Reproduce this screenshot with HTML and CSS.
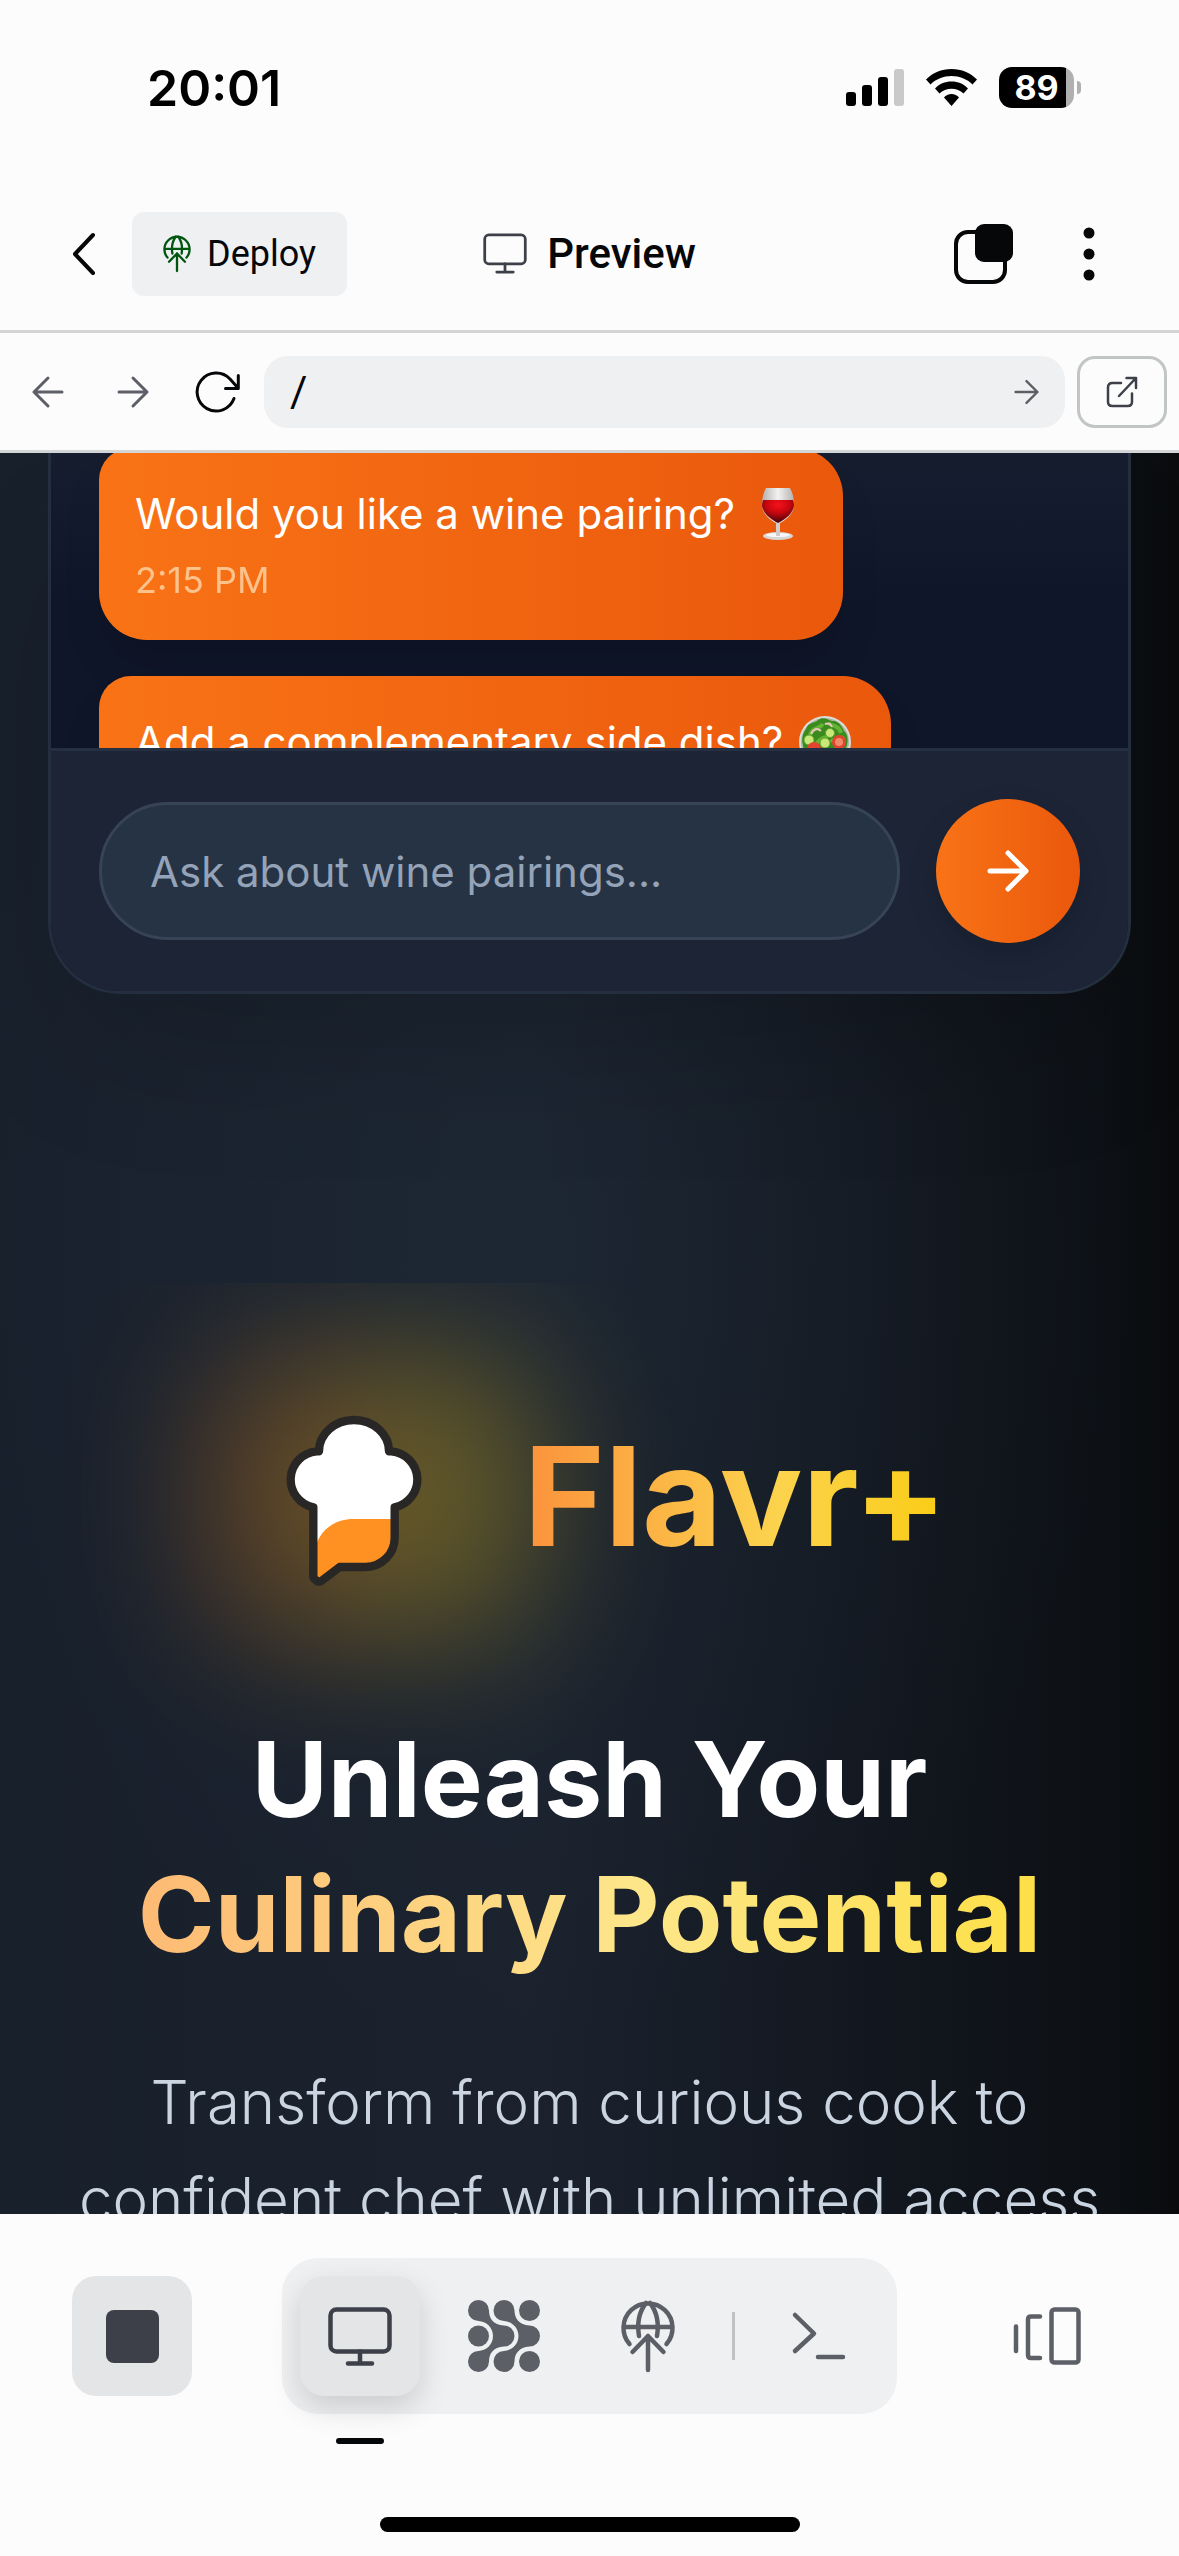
FILE: index.html
```html
<!DOCTYPE html>
<html lang="en">
<head>
<meta charset="utf-8">
<meta name="viewport" content="width=device-width, initial-scale=1">
<title>Preview</title>
<link rel="stylesheet" href="styles.css">
</head>
<body>
<div class="status">
  <time class="clock">20:01</time>
  <div class="status-icons">
    <svg width="58" height="38" viewBox="0 0 58 38" aria-hidden="true"><rect y="23" width="10" height="14" rx="3"/><rect x="16" y="16" width="10" height="21" rx="3"/><rect x="32" y="8" width="10" height="29" rx="3"/><rect x="48" width="10" height="37" rx="3" fill="#c9c9c9"/></svg>
    <svg width="51" height="38" viewBox="0 0 51 38" aria-hidden="true"><path d="M25.500 0C35.500 0 44.500 4 51 10.500L46.500 15.500C41 10 33.500 7 25.500 7S10 10 4.500 15.500L0 10.500C6.500 4 15.500 0 25.500 0ZM25.500 12.500C32 12.500 38 15 42 19.500L37.500 24.500C34.500 21.500 30 19.700 25.500 19.700S16.500 21.500 13.500 24.500L9 19.500C13 15 19 12.500 25.500 12.500ZM25.500 25C28.500 25 31.200 26.500 33 28.500L25.500 37L18 28.500C19.800 26.500 22.500 25 25.500 25Z"/></svg>
    <div class="battery"><span class="battery-level">89</span></div>
  </div>
</div>

<header class="topbar">
  <div class="topbar-left">
    <button class="icon-btn back" aria-label="Back"><svg width="24" height="46" viewBox="0 0 24 46" class="line" stroke-width="4"><path d="M21 4 3 23l18 19"/></svg></button>
    <button class="deploy"><svg width="28" height="37" viewBox="0 0 54 72" class="line" stroke-width="4.500"><use href="#globe-up"/></svg>Deploy</button>
  </div>
  <h1 class="title"><svg width="44" height="41" viewBox="0 0 64 59" class="line" stroke-width="4"><use href="#monitor"/></svg>Preview</h1>
  <div class="topbar-right">
    <button class="icon-btn" aria-label="Tabs"><svg width="60" height="60" viewBox="0 0 60 60"><rect x="2" y="8" width="49" height="50" rx="12" class="line" stroke-width="4"/><rect x="21" y="0" width="38" height="38" rx="9" fill="#060709"/></svg></button>
    <button class="icon-btn" aria-label="More"><svg width="12" height="54" viewBox="0 0 12 54" fill="#060709"><circle cx="6" cy="6" r="5.500"/><circle cx="6" cy="27" r="5.500"/><circle cx="6" cy="48" r="5.500"/></svg></button>
  </div>
</header>

<nav class="addressbar" aria-label="Page navigation">
  <button class="nav-btn muted" aria-label="Go back"><svg width="32" height="32" viewBox="0 0 32 32" class="line" stroke-width="3"><path d="M30 16H2M16 2 2 16l14 14"/></svg></button>
  <button class="nav-btn muted" aria-label="Go forward"><svg width="32" height="32" viewBox="0 0 32 32" class="line" stroke-width="3"><path d="M2 16h28M16 2l14 14-14 14"/></svg></button>
  <button class="nav-btn" aria-label="Reload"><svg width="44" height="42" viewBox="0 0 44 42" class="line" stroke-width="3"><path d="M38 27.500A19 19 0 1 1 34 8L42 17M42.300 4.500V17.500H29.500"/></svg></button>
  <form class="address">
    <input type="text" value="/" aria-label="Path">
    <button class="icon-btn muted" type="button" aria-label="Go"><svg width="25" height="26" viewBox="0 0 32 32" class="line" stroke-width="3"><path d="M2 16h28M16 2l14 14-14 14"/></svg></button>
  </form>
  <button class="open-tab" aria-label="Open in new tab"><svg width="32" height="32" viewBox="0 0 32 32" class="line" stroke-width="2.500"><path d="M15 7H6.500Q2 7 2 11.500V26Q2 30 6.500 30H21.500Q26 30 26 26V17.500M13 20 30 2M20.500 2H30V12"/></svg></button>
</nav>

<main class="preview">
  <section class="chat">
    <div class="messages">
      <div class="bubble">
        <p>Would you like a wine pairing?
          <svg class="emoji" viewBox="0 0 54 54" role="img" aria-label="wine glass"><defs><radialGradient id="wine" cx=".5" cy=".2" r=".8"><stop offset="0" stop-color="#f5121c"/><stop offset=".45" stop-color="#c9060f"/><stop offset="1" stop-color="#3c0508"/></radialGradient><linearGradient id="glass"><stop offset="0" stop-color="#b5b0ae"/><stop offset=".5" stop-color="#f2f2f2"/><stop offset="1" stop-color="#b5b0ae"/></linearGradient></defs><path d="M13 1H37C40 6 41 12 41 18 41 27 33 33 27 36L26.500 47H23.500L23 36C17 33 9 27 9 18 9 12 10 6 13 1Z" fill="url(#glass)"/><path d="M10 13H40C41 16 41 18 41 19 39 28 31 33 25 36 19 33 11 28 9 19 9 18 9 16 10 13Z" fill="url(#wine)"/><ellipse cx="25" cy="49" rx="15" ry="4" fill="#d8d6d5"/><ellipse cx="25" cy="48" rx="12" ry="2" fill="#f7f7f7"/><path d="M23 36h4v13h-4z" fill="#d0cccb"/></svg></p>
        <time>2:15 PM</time>
      </div>
      <div class="bubble">
        <p>Add a complementary side dish?
          <svg class="emoji" viewBox="0 0 54 54" role="img" aria-label="green salad"><g transform="translate(-3 0)"><circle cx="27" cy="27" r="26" fill="#d9dcd7"/><circle cx="27" cy="27" r="24" fill="#a9b8a0"/><path d="M8 14C10 7 18 8 20 5 25 1 30 5 34 6 40 5 44 11 46 16 51 20 50 28 48 33 46 42 38 48 27 48 15 48 6 41 5 30 3 24 5 18 8 14Z" fill="#3c8a1e"/><path d="M12 20C14 12 22 14 25 9M30 8C35 12 41 10 43 18M14 33C20 28 22 22 30 22M33 27C37 22 42 26 46 22" fill="none" stroke="#63b334" stroke-width="4"/><path d="M13 19Q17 11 23 16M27 9Q32 7 34 12" fill="none" stroke="#efc3c0" stroke-width="2"/><g fill="#c9e879" stroke="#5fa52a"><circle cx="11" cy="25" r="5"/><circle cx="32" cy="18" r="4.500"/><circle cx="27" cy="28" r="5"/></g><circle cx="41" cy="27" r="7" fill="#e2442f"/><circle cx="41" cy="27" r="4" fill="#f38a6b"/><circle cx="16" cy="34" r="7" fill="#e2442f"/></g></svg></p>
        <time>2:15 PM</time>
      </div>
    </div>
    <form class="composer">
      <input type="text" placeholder="Ask about wine pairings..." aria-label="Ask about wine pairings">
      <button class="send" type="button" aria-label="Send"><svg width="42" height="42" viewBox="0 0 42 42" class="line" stroke-width="5"><path d="M3 21h36M21 3l18 18-18 18"/></svg></button>
    </form>
  </section>

  <section class="hero">
    <div class="brand">
      <div class="mark">
        <svg width="140" height="170" viewBox="555 471 420 510" role="img" aria-label="Flavr+ chef hat">
          <path d="M660 577A105 94 0 0 1 870 577H877A85 85 0 0 1 887 745V836A88 88 0 0 1 800 924H722L667 966Q657 972 643 957V745A85 85 0 0 1 653 577Z" fill="#fff"/>
          <path d="M643 900C648 825 695 780 765 780H887V836A88 88 0 0 1 800 924H722L667 966Q657 972 643 957Z" fill="#ff9022"/>
          <path d="M660 577A105 94 0 0 1 870 577H877A85 85 0 0 1 887 745V836A88 88 0 0 1 800 924H722L667 966Q655 972 643 955V745A85 85 0 0 1 653 577Z" fill="none" stroke="#282725" stroke-width="25" stroke-linejoin="round"/>
        </svg>
      </div>
      <span class="wordmark">Flavr+</span>
    </div>
    <h2>Unleash Your<br><span class="accent">Culinary Potential</span></h2>
    <p class="lead">Transform from curious cook to confident chef with unlimited access</p>
  </section>
</main>

<footer class="dock">
  <div class="dock-row">
    <button class="tool filled" aria-label="Stop"><svg width="53" height="53"><rect width="53" height="53" rx="8" fill="#3d4048"/></svg></button>
    <div class="tools">
      <button class="tool filled active" aria-label="Preview"><svg width="64" height="59" viewBox="0 0 64 59" class="line" stroke-width="4.500"><g id="monitor"><rect x="2.500" y="2.500" width="59" height="42" rx="6"/><path d="M32 44.500V56M20 56.500H44"/></g></svg></button>
      <button class="tool" aria-label="Agent"><svg width="72" height="72" viewBox="0 0 72 72" fill="#5d5f67"><circle cx="61.500" cy="10.500" r="10.500"/><circle cx="10.500" cy="36" r="10.500"/><circle cx="61.500" cy="61.500" r="10.500"/><path d="M10.500 0A10.500 10.500 0 0 1 21 10.500C21 18 25 25 36 25.500A10.500 10.500 0 0 1 36 46.500C25 47 21 54 21 61.500A10.500 10.500 0 1 1 10.500 51C18 50.500 25 45 25 36S18 21.500 10.500 21A10.500 10.500 0 0 1 10.500 0Z"/><path d="M36 0A10.500 10.500 0 0 1 46.500 10.500C46.500 18 51 25 61.500 25.500A10.500 10.500 0 0 1 61.500 46.500C51 47 46.500 54 46.500 61.500A10.500 10.500 0 1 1 36 51C43 50.500 50.500 45 50.500 36S43 21.500 36 21A10.500 10.500 0 0 1 36 0Z"/></svg></button>
      <button class="tool" aria-label="Deployments"><svg width="54" height="72" viewBox="0 0 54 72" class="line" stroke-width="4.500"><g id="globe-up"><path d="M8.500 44A24.500 24.500 0 1 1 45.500 44M2.500 27H51.500M18 36C16 24 18 12 25 3M36 36C38 24 36 12 29 3M27 70V36M11.500 52 27 36 42.500 52"/></g></svg></button>
      <span class="divider"></span>
      <button class="tool" aria-label="Shell"><svg width="54" height="48" viewBox="0 0 54 48" class="line" stroke-width="4.500"><path d="M3 3 22 21.500 3 39M26 45H51"/></svg></button>
    </div>
    <button class="tool end" aria-label="Panels"><svg width="68" height="58" viewBox="0 0 68 58" class="line" stroke-width="4.500"><path d="M3 19.500V44M27 9.500H18Q15 9.500 15 12.500V48Q15 51 18 51H27"/><rect x="38.500" y="2.500" width="27" height="53" rx="3"/></svg></button>
  </div>
  <div class="home"></div>
</footer>
</body>
</html>
```
FILE: styles.css
```css
* { box-sizing: border-box; margin: 0; padding: 0; }

body {
  display: flex;
  flex-direction: column;
  height: 100vh;
  background: #fcfcfd;
  color: #060709;
  font-family: Inter, "Liberation Sans", sans-serif;
}

button {
  display: flex;
  align-items: center;
  justify-content: center;
  border: 0;
  background: none;
  color: inherit;
  font: inherit;
}

input { border: 0; outline: 0; background: none; font: inherit; min-width: 0; }
svg { flex: none; overflow: visible; }
.line { fill: none; stroke: currentColor; stroke-linecap: round; stroke-linejoin: round; }
.muted { color: #5d5f67; }

/* Phone status bar */
.status {
  display: flex;
  flex: none;
  align-items: center;
  justify-content: space-between;
  height: 177px;
  padding: 0 105px 0 147px;
}
.clock { font-size: 50px; font-weight: 600; color: #000; }
.status-icons { display: flex; align-items: center; gap: 22px; }
.battery {
  position: relative;
  display: flex;
  width: 75px;
  height: 41px;
  border-radius: 13px;
  background: linear-gradient(to right, #000 67px, #b0b0b0 67px);
}
.battery::after {
  content: "";
  position: absolute;
  top: 14px;
  right: -7px;
  width: 4px;
  height: 13px;
  border-radius: 0 4px 4px 0;
  background: #b0b0b0;
}
.battery-level { width: 100%; color: #fff; font-size: 34px; font-weight: 700; line-height: 41px; text-align: center; }
.clock, .status-icons { margin-bottom: 2px; }

/* App header */
.topbar {
  display: grid;
  flex: none;
  grid-template-columns: 1fr auto 1fr;
  align-items: center;
  height: 156px;
  padding: 0 72px;
  border-bottom: 3px solid #d4d5d6;
  font-family: Roboto, "Liberation Sans", sans-serif;
}
.topbar-left { display: flex; gap: 36px; }
.deploy {
  gap: 16px;
  height: 84px;
  padding: 0 31px;
  border-radius: 12px;
  background: #eff0f2;
  font-size: 36px;
}
.deploy svg { color: #00560f; }
.title { display: flex; align-items: center; gap: 20px; font-size: 42px; font-weight: 500; }
.title svg { color: #3d4048; }
.topbar-right { display: flex; justify-content: flex-end; gap: 69px; padding-right: 12px; }

/* Address bar */
.addressbar {
  display: flex;
  flex: none;
  align-items: center;
  height: 120px;
  padding: 0 12px 0 5px;
  border-bottom: 3px solid #d4d5d6;
}
.nav-btn { width: 85px; height: 72px; }
.address {
  display: flex;
  flex: 1;
  height: 72px;
  margin: 0 12px 0 4px;
  padding: 0 26px;
  border-radius: 24px;
  background: #eff0f2;
}
.address input { flex: 1; color: #060709; font-family: Roboto, "Liberation Sans", sans-serif; font-size: 42px; }
.open-tab {
  width: 90px;
  height: 72px;
  border: 3px solid #c1c5c4;
  border-radius: 18px;
  color: #3d4048;
}

/* Previewed site */
.preview {
  flex: 1;
  min-height: 0;
  overflow: hidden;
  background:
    radial-gradient(600px 800px at 45% 45%, rgba(32, 46, 60, .4), transparent),
    linear-gradient(to right, #18202c, #1b222e 45%, #12171f 75%, #0d1014 94%, #090b0d);
  color: #fff;
}
.chat {
  margin: 0 48px;
  overflow: hidden;
  border: solid #232e3f;
  border-width: 0 3px 3px;
  border-radius: 0 0 72px 72px;
  background: #0f172a;
  box-shadow: 0 75px 150px -36px rgba(0, 0, 0, .2);
}
.messages {
  display: flex;
  flex-direction: column;
  align-items: flex-start;
  gap: 36px;
  height: 295px;
  padding: 0 48px;
  overflow: hidden;
  background: linear-gradient(#151d2f, #0f1629 50%);
}
.bubble {
  flex: none;
  padding: 36px;
  border-radius: 32px 48px 48px;
  background: linear-gradient(to right, #f97316, #ea580c);
  box-shadow: 0 30px 45px -9px rgba(0, 0, 0, .15);
}
.bubble:first-child { margin-top: -5px; }
.bubble p { display: flex; align-items: center; gap: 18px; font-size: 42px; line-height: 60px; }
.bubble time { display: block; margin-top: 12px; color: #fed7aa; font-size: 36px; line-height: 48px; opacity: .8; }
.emoji { width: 54px; height: 54px; }
.composer {
  display: flex;
  align-items: center;
  gap: 36px;
  padding: 48px;
  border-top: 3px solid #253142;
  background: #1c2436;
}
.composer input {
  flex: 1;
  height: 138px;
  padding: 0 48px;
  border: 3px solid #364456;
  border-radius: 72px;
  background: #263345;
  color: #fff;
  font-size: 42px;
}
.composer input::placeholder { color: #94a3b8; opacity: 1; }
.send {
  width: 144px;
  height: 144px;
  border-radius: 50%;
  background: linear-gradient(to right, #f97316, #ea580c);
  box-shadow: 0 12px 30px rgba(0, 0, 0, .15);
  color: #fff;
}

.hero {
  margin-top: 289px;
  padding: 69px 72px;
  overflow: hidden;
  text-align: center;
}
.brand { display: flex; align-items: center; justify-content: center; gap: 60px; height: 288px; padding-left: 12px; }
.mark { position: relative; display: flex; align-items: center; justify-content: center; width: 220px; height: 288px; padding-top: 10px; }
.mark::before {
  content: "";
  position: absolute;
  inset: 0 -72px 0 -36px;
  border-radius: 72px;
  background: linear-gradient(to right, #f97316, #facc15 65%);
  filter: blur(72px);
  opacity: .33;
}
.mark svg { position: relative; }
.wordmark {
  position: relative;
  background: linear-gradient(to right, #fb923c, #fcd34d 60%, #facc15);
  background-clip: text;
  color: transparent;
  font-size: 138px;
  font-weight: 700;
  line-height: 180px;
}
h2 { position: relative; margin-top: 72px; font-size: 104px; font-weight: 700; line-height: 135px; }
.accent {
  background: linear-gradient(to right, #fdba74, #fde68a 55%, #fde047);
  background-clip: text;
  color: transparent;
}
.lead { margin-top: 72px; color: #cbd5e1; font-size: 60px; font-weight: 300; line-height: 97px; }

/* Bottom dock */
.dock { display: flex; flex: none; flex-direction: column; height: 342px; padding: 44px 72px 24px; }
.dock-row { display: grid; grid-template-columns: 1fr auto 1fr; align-items: center; }
.tools { display: flex; align-items: center; gap: 24px; padding: 18px; border-radius: 36px; background: #eff0f2; }
.tool { width: 120px; height: 120px; border-radius: 24px; color: #5d5f67; }
.filled { background: #e4e5e7; color: #3d4048; }
.active { position: relative; box-shadow: 0 12px 30px rgba(0, 0, 0, .15); }
.active::after {
  content: "";
  position: absolute;
  top: 162px;
  left: 36px;
  width: 48px;
  height: 6px;
  border-radius: 3px;
  background: #060709;
}
.divider { width: 3px; height: 48px; background: #c0c1c3; }
.end { justify-self: end; }
.home { width: 420px; height: 15px; margin: auto auto 0; border-radius: 8px; background: #000; }
```
